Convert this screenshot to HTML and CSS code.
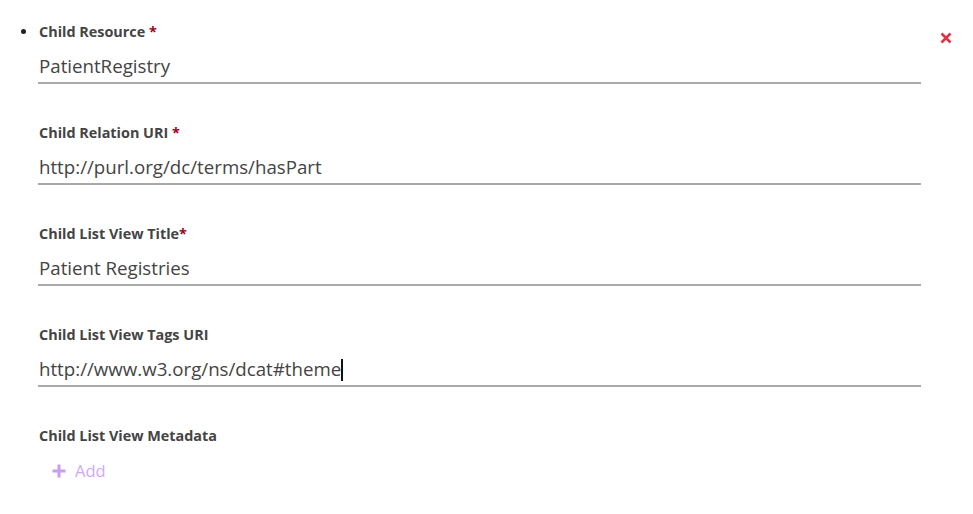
FILE: index.html
```html
<!DOCTYPE html>
<html>
<head>
<meta charset="utf-8">
<link rel="stylesheet" href="styles.css">
</head>
<body>
<div class="page">
  <ul class="list">
    <li class="item">
      <div class="row">
        <div class="fields">
          <div class="field">
            <div class="label">Child Resource <span class="req">*</span></div>
            <div class="input">PatientRegistry</div>
          </div>
          <div class="field">
            <div class="label">Child Relation URI <span class="req">*</span></div>
            <div class="input">http://purl.org/dc/terms/hasPart</div>
          </div>
          <div class="field">
            <div class="label">Child List View Title<span class="req">*</span></div>
            <div class="input">Patient Registries</div>
          </div>
          <div class="field">
            <div class="label">Child List View Tags URI</div>
            <div class="input">http://www.w3.org/ns/dcat#theme<span class="caret"></span></div>
          </div>
          <div class="field last">
            <div class="label">Child List View Metadata</div>
            <div class="add">
              <svg class="plus" width="14" height="14" viewBox="0 0 14 14"><path d="M7 0.5v13M0.5 7h13" stroke="currentColor" stroke-width="3" fill="none"/></svg>
              <span>Add</span>
            </div>
          </div>
        </div>
        <button class="remove" aria-label="Remove">
          <svg width="12" height="12" viewBox="0 0 12 12"><path d="M1.5 1.5l9 9M10.5 1.5l-9 9" stroke="currentColor" stroke-width="2.6" fill="none"/></svg>
        </button>
      </div>
    </li>
  </ul>
</div>
</body>
</html>
```

FILE: styles.css
```css
* { box-sizing: border-box; }
html, body { margin: 0; padding: 0; background: #fff; }
body {
  font-family: "Open Sans", "Liberation Sans", sans-serif;
  color: #444;
}
.page { width: 973px; height: 514px; overflow: hidden; }
.list {
  margin: 22px 0 0 0;
  padding: 0 0 0 38px;
  list-style: disc;
  font-size: 14px;
  line-height: 20px;
}
.item { display: list-item; color: #222; }
.row {
  display: flex;
  align-items: flex-start;
  gap: 19px;
}
.fields { width: 883px; }
.field { margin-bottom: 39px; }
.label {
  font-size: 14.4px;
  font-weight: 700;
  line-height: 20px;
  color: #444;
  padding-left: 1px;
}
.req { color: #a0001c; }
.input {
  margin-top: 11px;
  font-size: 18.7px;
  line-height: 25px;
  padding: 0 0 4px 1px;
  border-bottom: 2px solid #aaa;
  color: #444;
  white-space: nowrap;
}
.caret {
  display: inline-block;
  width: 2px;
  height: 22px;
  background: #111;
  vertical-align: -5px;
}
.add {
  display: flex;
  align-items: center;
  gap: 9px;
  margin-top: 14px;
  padding-left: 14px;
  font-size: 16.5px;
  line-height: 22px;
  color: #d1a8f6;
}
.plus { color: #c99cf2; }
.remove {
  border: 0;
  background: none;
  padding: 0;
  margin-top: 10px;
  color: #dc3545;
  width: 12px;
  height: 12px;
  display: flex;
  cursor: pointer;
}
```
